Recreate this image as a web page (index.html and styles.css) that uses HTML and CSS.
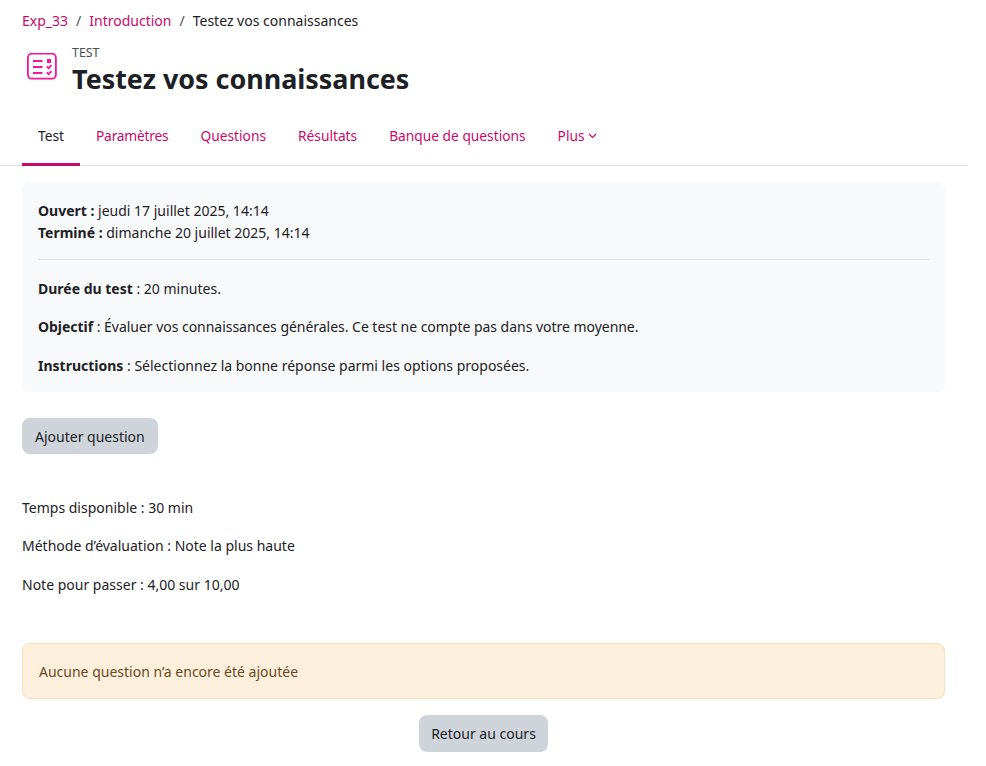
FILE: index.html
```html
<!DOCTYPE html>
<html lang="fr">
<head>
<meta charset="utf-8">
<title>Testez vos connaissances</title>
<link rel="stylesheet" href="styles.css">
</head>
<body>
<main class="page">
  <nav class="breadcrumb">
    <a href="#">Exp_33</a><span class="sep">/</span><a href="#">Introduction</a><span class="sep">/</span><span>Testez vos connaissances</span>
  </nav>
  <header class="heading">
    <svg class="icon" width="32" height="28" viewBox="0 0 32 28" fill="none" stroke="#f5149b" stroke-width="1.8">
      <rect x="1.9" y="0.7" width="28" height="25" rx="4"/>
      <path d="M7 8h9.5M7 14h9.5M7 20h9.5" stroke-width="1.8"/>
      <rect x="21" y="6" width="4" height="4" fill="#f5149b" stroke="none"/>
      <path d="M20.8 13.4l1.8 1.8 2.9-3M20.8 19.4l1.8 1.8 2.9-3"/>
    </svg>
    <div>
      <div class="eyebrow">TEST</div>
      <h1>Testez vos connaissances</h1>
    </div>
  </header>
  <ul class="tabs">
    <li class="active"><a href="#">Test</a></li>
    <li class="narrow"><a href="#">Paramètres</a></li>
    <li><a href="#">Questions</a></li>
    <li><a href="#">Résultats</a></li>
    <li><a href="#">Banque de questions</a></li>
    <li><a href="#">Plus<svg class="chev" width="9" height="6" viewBox="0 0 9 6" fill="none" stroke="#c70a6a" stroke-width="1.2"><path d="M1 1l3.5 3.5L8 1"/></svg></a></li>
  </ul>
  <div class="content">
    <section class="summary">
      <p class="dates"><b>Ouvert :</b> jeudi 17 juillet 2025, 14:14<br><b>Terminé :</b> dimanche 20 juillet 2025, 14:14</p>
      <hr>
      <p><b>Durée du test</b> : 20 minutes.</p>
      <p class="objective"><b>Objectif</b> : Évaluer vos connaissances générales. Ce test ne compte pas dans votre moyenne.</p>
      <p><b>Instructions</b> : Sélectionnez la bonne réponse parmi les options proposées.</p>
    </section>
    <button class="btn add">Ajouter question</button>
    <div class="info">
      <p>Temps disponible : 30 min</p>
      <p>Méthode d’évaluation : Note la plus haute</p>
      <p>Note pour passer : 4,00 sur 10,00</p>
    </div>
    <div class="alert">Aucune question n’a encore été ajoutée</div>
    <div class="back"><button class="btn">Retour au cours</button></div>
  </div>
</main>
</body>
</html>
```
FILE: styles.css
```css
* { box-sizing: border-box; }
html, body { margin: 0; height: 100%; overflow: hidden; background: #fff; }
body {
  font-family: "Noto Sans", "Liberation Sans", sans-serif;
  font-size: 14px;
  line-height: 22px;
  color: #1d2125;
}
a { color: #c70a6a; text-decoration: none; }
.page { width: 968px; padding-top: 10px; }
.breadcrumb { padding-left: 22px; height: 22px; }
.sep { margin: 0 8px; color: #495057; }
.heading { display: flex; padding: 10px 0 0 26px; height: 64px; }
.icon { margin-top: 11px; margin-right: 14px; }
.eyebrow { font-size: 12.4px; line-height: 14px; color: #495057; margin-top: 4px; }
h1 { margin: 1px 0 0; font-size: 26.9px; line-height: 36px; font-weight: 700; color: #1d2125; }
.tabs {
  list-style: none; margin: 14px 0 0; padding: 0 0 0 22px;
  display: flex; height: 56px; border-bottom: 1px solid #dee2e6;
}
.tabs li { height: 56px; font-size: 13.75px; }
.tabs a { display: flex; align-items: center; height: 100%; padding: 0 16px 4px; }
.tabs .narrow { letter-spacing: -0.2px; }
.tabs .active { box-shadow: inset 0 -3px 0 #c70a6a; }
.tabs .active a { color: #1d2125; }
.chev { margin-left: 3px; }
.content { width: 945px; padding: 16px 0 0 22px; }
.summary { background: #f8f9fa; border-radius: 8px; padding: 18px 16px 6px; height: 210px; }
.summary p { margin: 0 0 16.5px; }
.summary .dates { margin: 0; }
.summary .objective { margin: -1px 0 17px; letter-spacing: -0.03px; }
.summary hr { border: 0; border-top: 1px solid #dee2e6; margin: 15px 0 18px; }
.btn {
  font: inherit; color: #1d2125; background: #ced4da; border: 0;
  border-radius: 8px; height: 36px; padding: 1px 13px 0;
}
.add { display: block; margin-top: 26px; }
.info { margin-top: 42.5px; height: 146.5px; }
.info p { margin: 0 0 16.5px; }
.alert {
  height: 56px; padding: 17px 16px 0; background: #fcefdc; border: 1px solid #fbdfb9;
  border-radius: 8px; color: #6a4a1f;
}
.back { display: flex; justify-content: center; margin-top: 16px; }
.back .btn { padding: 1px 12.5px 0; height: 37px; }
```
